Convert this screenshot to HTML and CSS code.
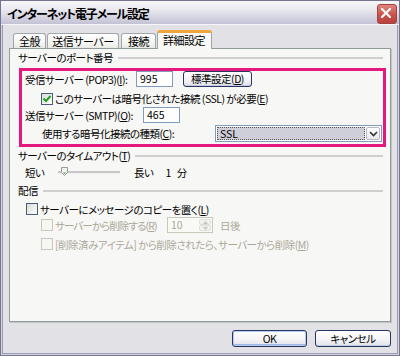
FILE: index.html
```html
<!DOCTYPE html>
<html lang="ja">
<head>
<meta charset="utf-8">
<title>インターネット電子メール設定</title>
<link rel="stylesheet" href="styles.css">
</head>
<body>
<div class="window">
  <div class="titlebar">
    <span class="title">インターネット電子メール設定</span>
    <span class="close">
      <svg width="18" height="18" viewBox="0 0 18 18"><path d="M5 5 L13 13 M13 5 L5 13" stroke="#fff" stroke-width="2.2" stroke-linecap="round"/></svg>
    </span>
  </div>
  <div class="body">
    <div class="tabs">
      <div class="tab t1">全般</div>
      <div class="tab t2">送信サーバー</div>
      <div class="tab t3">接続</div>
      <div class="tab active">詳細設定</div>
    </div>
    <div class="panel">
      <div class="group-head"><span>サーバーのポート番号</span><i class="rule"></i></div>
      <div class="highlight">
        <div class="row r1">
          <span class="lbl l1">受信サーバー (POP3)(<u>I</u>):</span>
          <span class="input w37">995</span>
          <span class="btn std">標準設定(<u>D</u>)</span>
        </div>
        <div class="row r2">
          <span class="check on">
            <svg width="12" height="12" viewBox="0 0 12 12"><path d="M2.5 5.5 L5 8 L9.5 3" fill="none" stroke="#21a121" stroke-width="2"/></svg>
          </span>
          <span class="ctext">このサーバーは暗号化された接続 (SSL) が必要(<u>E</u>)</span>
        </div>
        <div class="row r3">
          <span class="lbl l3">送信サーバー (SMTP)(<u>O</u>):</span>
          <span class="input w37">465</span>
        </div>
        <div class="row r4">
          <span class="lbl l4">使用する暗号化接続の種類(<u>C</u>):</span>
          <span class="select">
            <span class="value">SSL</span>
            <span class="drop">
              <svg width="9" height="6" viewBox="0 0 9 6"><path d="M1 1 L4.5 4.5 L8 1" fill="none" stroke="#333" stroke-width="1.6"/></svg>
            </span>
          </span>
        </div>
      </div>

      <div class="group-head g2"><span>サーバーのタイムアウト(<u>T</u>)</span><i class="rule"></i></div>
      <div class="row slider-row">
        <span class="short">短い</span>
        <span class="slider">
          <span class="track"></span>
          <svg class="thumb" width="7" height="9" viewBox="0 0 7 9"><path d="M0.5 0.5 H6.5 V5.5 L3.5 8.5 L0.5 5.5 Z" fill="#f4f4f0" stroke="#9a9a9a"/><path d="M2 5.5 L3.5 7.2 L5 5.5 Z" fill="#3cb43c"/></svg>
        </span>
        <span class="long">長い</span><span class="num">1</span><span class="min">分</span>
      </div>

      <div class="group-head g3"><span>配信</span><i class="rule"></i></div>
      <div class="row c1">
        <span class="check"></span>
        <span class="ctext">サーバーにメッセージのコピーを置く(<u>L</u>)</span>
      </div>
      <div class="row c2 disabled">
        <span class="check"></span>
        <span class="ctext dlbl">サーバーから削除する(<u>R</u>)</span>
        <span class="spin">
          <span class="spin-val">10</span>
          <span class="spin-btns">
            <span class="sb"><svg width="5" height="3" viewBox="0 0 5 3"><path d="M0 3 L2.5 0 L5 3 Z" fill="#c6c6c0"/></svg></span>
            <span class="sb"><svg width="5" height="3" viewBox="0 0 5 3"><path d="M0 0 L2.5 3 L5 0 Z" fill="#c6c6c0"/></svg></span>
          </span>
        </span>
        <span class="days">日後</span>
      </div>
      <div class="row c3 disabled">
        <span class="check"></span>
        <span class="ctext">[削除済みアイテム] から削除されたら、サーバーから削除(<u>M</u>)</span>
      </div>
    </div>
    <div class="actions">
      <span class="btn big default">OK</span>
      <span class="btn big cancel">キャンセル</span>
    </div>
  </div>
</div>
</body>
</html>
```
FILE: styles.css
```css
html, body {
  margin: 0;
  padding: 0;
  background: #e2e1e6;
}

.window {
  width: 400px;
  height: 356px;
  box-sizing: border-box;
  border: 1px solid #74748f;
  box-shadow: inset 0 0 0 1px #d4d4e2, inset 0 0 0 2px #9a9ab2;
  background: #e2e1e6;
  display: flex;
  flex-direction: column;
  font-family: "Noto Sans CJK JP", "Noto Sans", sans-serif;
  font-size: 10.5px;
  letter-spacing: -0.5px;
  font-feature-settings: "palt";
  color: #000;
  overflow: hidden;
}

u { text-decoration: underline; text-underline-offset: 1px; }

.titlebar {
  height: 23px;
  border-bottom: 1px solid #f6f6fa;
  background: linear-gradient(#f7f7fa 0%, #eaeaf0 35%, #d2d2e0 75%, #c2c2d4 100%);
  display: flex;
  align-items: center;
  justify-content: space-between;
  padding: 0 2px 0 6px;
  flex-shrink: 0;
}

.title {
  font-weight: bold;
  font-size: 12px;
  letter-spacing: -1.2px;
  line-height: 14px;
  margin-top: 2px;
}

.close {
  width: 18px;
  height: 18px;
  border-radius: 3px;
  border: 1px solid #a14343;
  background: linear-gradient(#e0877f, #c9514a 55%, #b8443d);
  display: flex;
  margin-top: 2px;
}
.close svg { margin: -1px; }

.body {
  padding: 5px 8px 0 8px;
  display: flex;
  flex-direction: column;
}

.tabs {
  display: flex;
  align-items: flex-end;
  height: 19px;
  margin-bottom: -1px;
  padding-left: 4px;
  position: relative;
  z-index: 1;
}

.tab {
  height: 15px;
  box-sizing: border-box;
  margin-bottom: 1px;
  border: 1px solid #a0a6a8;
  border-bottom: none;
  border-radius: 3px 3px 0 0;
  background: linear-gradient(#ffffff, #f3f3f0 70%, #e8e8e4);
  text-align: center;
  line-height: 14px;
  font-size: 11px;
}
.t1 { width: 33px; }
.t2 { width: 72px; margin-left: 1px; }
.t3 { width: 35px; margin-left: 2px; }
.tab.active {
  width: 55px;
  margin-left: 1px;
  height: 19px;
  margin-bottom: 0;
  border-top: 3px solid #f0a63a;
  background: #f7f7f5;
  line-height: 15px;
  text-align: left;
  padding-left: 5px;
}

.panel {
  height: 274px;
  box-sizing: border-box;
  border: 1px solid #919b9c;
  box-shadow: 1px 1px 0 #c4c4c8;
  background: #f7f7f5;
  padding: 2px 7px 0 8px;
}

.group-head {
  display: flex;
  align-items: center;
  height: 13px;
  line-height: 13px;
}
.group-head .rule {
  flex: 1;
  height: 2px;
  background: #cfcfcf;
  margin-left: 5px;
}
.g2 { margin-top: 2px; }
.g3 { margin-top: 4px; }

.highlight {
  margin-top: 4px;
  margin-left: 1px;
  width: 367px;
  box-sizing: border-box;
  border: 3px solid #e5187f;
  padding-bottom: 2px;
}

.row {
  display: flex;
  align-items: center;
  white-space: nowrap;
}

.r1 { height: 16px; padding-left: 3px; }
.l1 { width: 111px; }
.r2 { height: 13px; margin-top: 5px; padding-left: 19px; }
.r3 { height: 16px; margin-top: 2px; padding-left: 3px; }
.l3 { width: 118px; }
.r4 { height: 17px; margin-top: 2px; padding-left: 20px; }
.l4 { width: 173px; }

.input {
  height: 16px;
  box-sizing: border-box;
  border: 1px solid #7f9db9;
  background: #fff;
  line-height: 14px;
  padding-left: 3px;
  letter-spacing: 0;
}
.w37 { width: 37px; }

.btn {
  box-sizing: border-box;
  border: 1px solid #26365e;
  border-radius: 3px;
  background: linear-gradient(#ffffff, #f4f4f6 55%, #e0e0ea);
  box-shadow: inset 0 -1px 0 #c8cde4;
  text-align: center;
}
.std {
  width: 69px;
  height: 16px;
  line-height: 14px;
  margin-left: 10px;
}

.check {
  width: 12px;
  height: 12px;
  box-sizing: border-box;
  border: 1px solid #4d5a78;
  background: linear-gradient(135deg, #dcdcd6, #fdfdfb);
  display: inline-flex;
  flex-shrink: 0;
}
.check svg { margin: -1px; }
.ctext { margin-left: 2px; }

.select {
  width: 167px;
  height: 17px;
  box-sizing: border-box;
  border: 1px solid #7f9db9;
  background: #fff;
  display: flex;
  padding: 1px;
}
.select .value {
  flex: 1;
  background: #cfcfd9;
  outline: 1px dotted #555;
  outline-offset: -1px;
  line-height: 13px;
  padding-left: 3px;
  letter-spacing: 0;
}
.select .drop {
  width: 14px;
  box-sizing: border-box;
  margin-left: 1px;
  border: 1px solid #b8b8c8;
  border-radius: 2px;
  background: linear-gradient(#ffffff, #e8e8ee);
  display: flex;
  align-items: center;
  justify-content: center;
}

.slider-row {
  height: 16px;
  margin-top: 2px;
  padding-left: 7px;
}
.short { width: 33px; }
.slider {
  width: 62px;
  height: 12px;
  position: relative;
  display: flex;
  align-items: center;
}
.track {
  width: 100%;
  height: 2px;
  background: #c8c8c8;
  border-bottom: 1px solid #f0f0f0;
}
.thumb {
  position: absolute;
  left: 3px;
  top: 1px;
}
.long { margin-left: 14px; }
.num { margin-left: 12px; }
.min { margin-left: 6px; }

.c1 { height: 14px; margin-top: 5px; padding-left: 8px; }
.c2 { height: 16px; margin-top: 1px; padding-left: 23px; }
.c3 { height: 14px; margin-top: 4px; padding-left: 23px; }

.disabled { color: #aca899; }
.disabled .check {
  border-color: #cac8bb;
  background: #f6f6f2;
}
.dlbl { width: 112px; letter-spacing: -0.9px; }

.spin {
  width: 46px;
  height: 16px;
  box-sizing: border-box;
  border: 1px solid #c9c7ba;
  background: #f9f9f6;
  display: flex;
}
.spin-val {
  flex: 1;
  padding-left: 3px;
  line-height: 14px;
  letter-spacing: 0;
}
.spin-btns {
  width: 14px;
  display: flex;
  flex-direction: column;
  padding: 1px;
  box-sizing: border-box;
}
.sb {
  flex: 1;
  border: 1px solid #e0e0da;
  border-radius: 2px;
  background: #f2f2ee;
  display: flex;
  align-items: center;
  justify-content: center;
}
.days { margin-left: 7px; }

.actions {
  display: flex;
  justify-content: flex-end;
  margin-top: 8px;
  gap: 8px;
}
.big {
  width: 75px;
  height: 17px;
  line-height: 15px;
}
.cancel { width: 76px; }
.default {
  box-shadow: inset 0 0 0 1px #b6cbf2, inset 0 -2px 0 #a4b6e4;
}
```
